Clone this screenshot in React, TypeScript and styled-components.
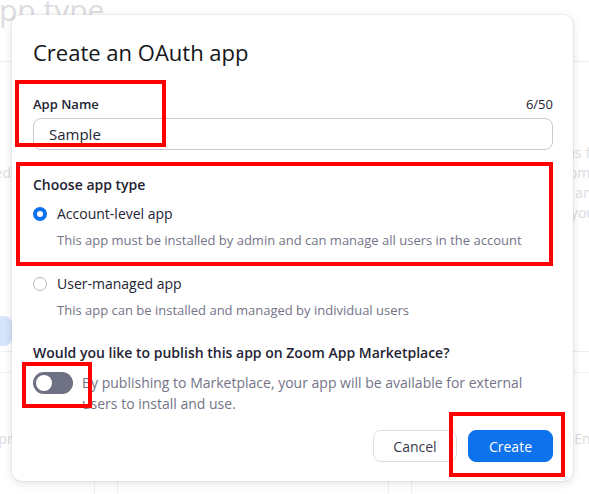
import styled, { createGlobalStyle } from "styled-components";

const GlobalStyle = createGlobalStyle`
  html, body {
    margin: 0;
    padding: 0;
    background: #ffffff;
  }
  body {
    font-family: "Open Sans", "Noto Sans", "Liberation Sans", sans-serif;
    -webkit-font-smoothing: antialiased;
  }
`;

const Page = styled.div`
  position: relative;
  width: 589px;
  height: 494px;
  overflow: hidden;
  background: #ffffff;
`;

/* ---------- faded page behind the dialog ---------- */

const Backdrop = styled.div`
  display: flex;
  flex-direction: column;
  color: #dcdce1;
`;

const BackTitle = styled.h1`
  box-sizing: border-box;
  height: 70px;
  margin: -8px 0 0 -20px;
  font-size: 30px;
  font-weight: 400;
  line-height: 36px;
  border-bottom: 1px solid #efeff2;
`;

const BackRow = styled.div`
  display: grid;
  grid-template-columns: 236px 1fr 230px;
  margin: 0 -70px 0 -220px;
  padding: 81px 0 0;
  height: 290px;
  box-sizing: border-box;
  border-bottom: 1px solid #efeff2;
`;

const BackText = styled.p`
  margin: 0;
  font-size: 14px;
  line-height: 20px;
`;

const BackPill = styled.div`
  margin-top: 113px;
  width: 232px;
  height: 30px;
  border-radius: 8px;
  background: #d5e5fa;
`;

const BackCards = styled.div`
  display: grid;
  grid-template-columns: 295px 272px 230px;
  column-gap: 22px;
  margin: 20px 0 0 -200px;
  border-top: 1px solid #f2f2f4;
`;

const BackCard = styled.div`
  height: 80px;
  border-left: 1px solid #efeff2;
  border-right: 1px solid #efeff2;
  padding: 56px 20px 0;
  font-size: 14px;
  line-height: 20px;
  text-align: right;
  &:nth-child(2) {
    text-align: left;
  }
`;

/* ---------- dialog ---------- */

const Modal = styled.div`
  position: absolute;
  left: 12px;
  top: 15px;
  width: 561px;
  height: 466px;
  box-sizing: border-box;
  padding: 22px 20px 19px 21px;
  background: #ffffff;
  border-radius: 10px;
  box-shadow: 0 2px 10px rgba(0, 0, 0, 0.12), 0 0 0 1px rgba(0, 0, 0, 0.04);
  display: flex;
  flex-direction: column;
  color: #232333;
`;

const Title = styled.h2`
  margin: 0;
  font-size: 22px;
  line-height: 30px;
  font-weight: 500;
  color: #131619;
`;

const LabelRow = styled.div`
  display: flex;
  justify-content: space-between;
  align-items: center;
  margin-top: 27px;
  font-size: 13px;
  line-height: 20px;
`;

const Label = styled.span`
  font-weight: 600;
`;

const Counter = styled.span`
  font-weight: 400;
`;

const TextInput = styled.input`
  box-sizing: border-box;
  margin-top: 4px;
  height: 32px;
  width: 100%;
  padding: 0 15px;
  border: 1px solid #c9c9d6;
  border-radius: 8px;
  font-family: inherit;
  font-size: 15px;
  color: #232333;
  outline: none;
`;

const SectionTitle = styled.div<{ $gap: number }>`
  margin-top: ${(p) => p.$gap}px;
  font-size: 14px;
  line-height: 20px;
  font-weight: 600;
`;

const Option = styled.label<{ $gap: number }>`
  display: flex;
  align-items: center;
  gap: 10px;
  margin-top: ${(p) => p.$gap}px;
  font-size: 14px;
  line-height: 22px;
`;

const Radio = styled.span<{ $checked?: boolean }>`
  box-sizing: border-box;
  width: 14px;
  height: 14px;
  border-radius: 50%;
  background: #ffffff;
  border: ${(p) => (p.$checked ? "4px solid #0e72ed" : "1px solid #b6b6c4")};
`;

const Hint = styled.div<{ $gap: number }>`
  margin: ${(p) => p.$gap}px 0 0 24px;
  font-size: 13px;
  line-height: 20px;
  color: #747487;
`;

const PublishRow = styled.div`
  display: flex;
  align-items: flex-start;
  gap: 9px;
  margin-top: 9px;
`;

const Toggle = styled.span`
  flex: none;
  position: relative;
  width: 40px;
  height: 22px;
  border-radius: 11px;
  background: #6e7084;
  &::after {
    content: "";
    position: absolute;
    left: 3px;
    top: 3px;
    width: 16px;
    height: 16px;
    border-radius: 50%;
    background: #ffffff;
  }
`;

const PublishText = styled.div`
  font-size: 14px;
  line-height: 21px;
  color: #747487;
`;

const Footer = styled.div`
  display: flex;
  justify-content: flex-end;
  gap: 11px;
  margin-top: auto;
`;

const Button = styled.button<{ $primary?: boolean }>`
  box-sizing: border-box;
  height: 32px;
  padding: 0;
  width: ${(p) => (p.$primary ? 85 : 84)}px;
  border-radius: 8px;
  font-family: inherit;
  font-size: 14px;
  cursor: pointer;
  border: 1px solid ${(p) => (p.$primary ? "#0e72ed" : "#dcdce3")};
  background: ${(p) => (p.$primary ? "#0e72ed" : "#ffffff")};
  color: ${(p) => (p.$primary ? "#ffffff" : "#39394d")};
`;

/* ---------- red annotation boxes ---------- */

const Mark = styled.div<{ $x: number; $y: number; $w: number; $h: number }>`
  position: absolute;
  left: ${(p) => p.$x}px;
  top: ${(p) => p.$y}px;
  width: ${(p) => p.$w}px;
  height: ${(p) => p.$h}px;
  box-sizing: border-box;
  border: 4px solid #ff0000;
  pointer-events: none;
`;

export default function App() {
  return (
    <Page>
      <GlobalStyle />
      <Backdrop>
        <BackTitle>App type</BackTitle>
        <BackRow>
          <div>
            <BackText>
              Build an app to support your own workflows with the things you
              need for your account &amp; Server
            </BackText>
            <BackPill />
          </div>
          <div />
          <BackText>
            Access Zoom resources from your own apps with the Zoom APIs, both
            with the account and for yourself, on behalf of your users
          </BackText>
        </BackRow>
        <BackCards>
          <BackCard>Build progressive</BackCard>
          <BackCard>Receive event-based notifications</BackCard>
          <BackCard>Embed</BackCard>
        </BackCards>
      </Backdrop>

      <Modal>
        <Title>Create an OAuth app</Title>
        <LabelRow>
          <Label>App Name</Label>
          <Counter>6/50</Counter>
        </LabelRow>
        <TextInput defaultValue="Sample" />

        <SectionTitle $gap={25}>Choose app type</SectionTitle>
        <Option $gap={8}>
          <Radio $checked />
          Account-level app
        </Option>
        <Hint $gap={5}>This app must be installed by admin and can manage all users in the account</Hint>
        <Option $gap={23}>
          <Radio />
          User-managed app
        </Option>
        <Hint $gap={5}>This app can be installed and managed by individual users</Hint>

        <SectionTitle $gap={23}>Would you like to publish this app on Zoom App Marketplace?</SectionTitle>
        <PublishRow>
          <Toggle />
          <PublishText>
            By publishing to Marketplace, your app will be available for external
            <br />
            users to install and use.
          </PublishText>
        </PublishRow>

        <Footer>
          <Button>Cancel</Button>
          <Button $primary>Create</Button>
        </Footer>
      </Modal>

      <Mark $x={15} $y={80} $w={151} $h={67} />
      <Mark $x={16} $y={162} $w={537} $h={104} />
      <Mark $x={22} $y={362} $w={70} $h={46} />
      <Mark $x={449} $y={412} $w={116} $h={65} />
    </Page>
  );
}
